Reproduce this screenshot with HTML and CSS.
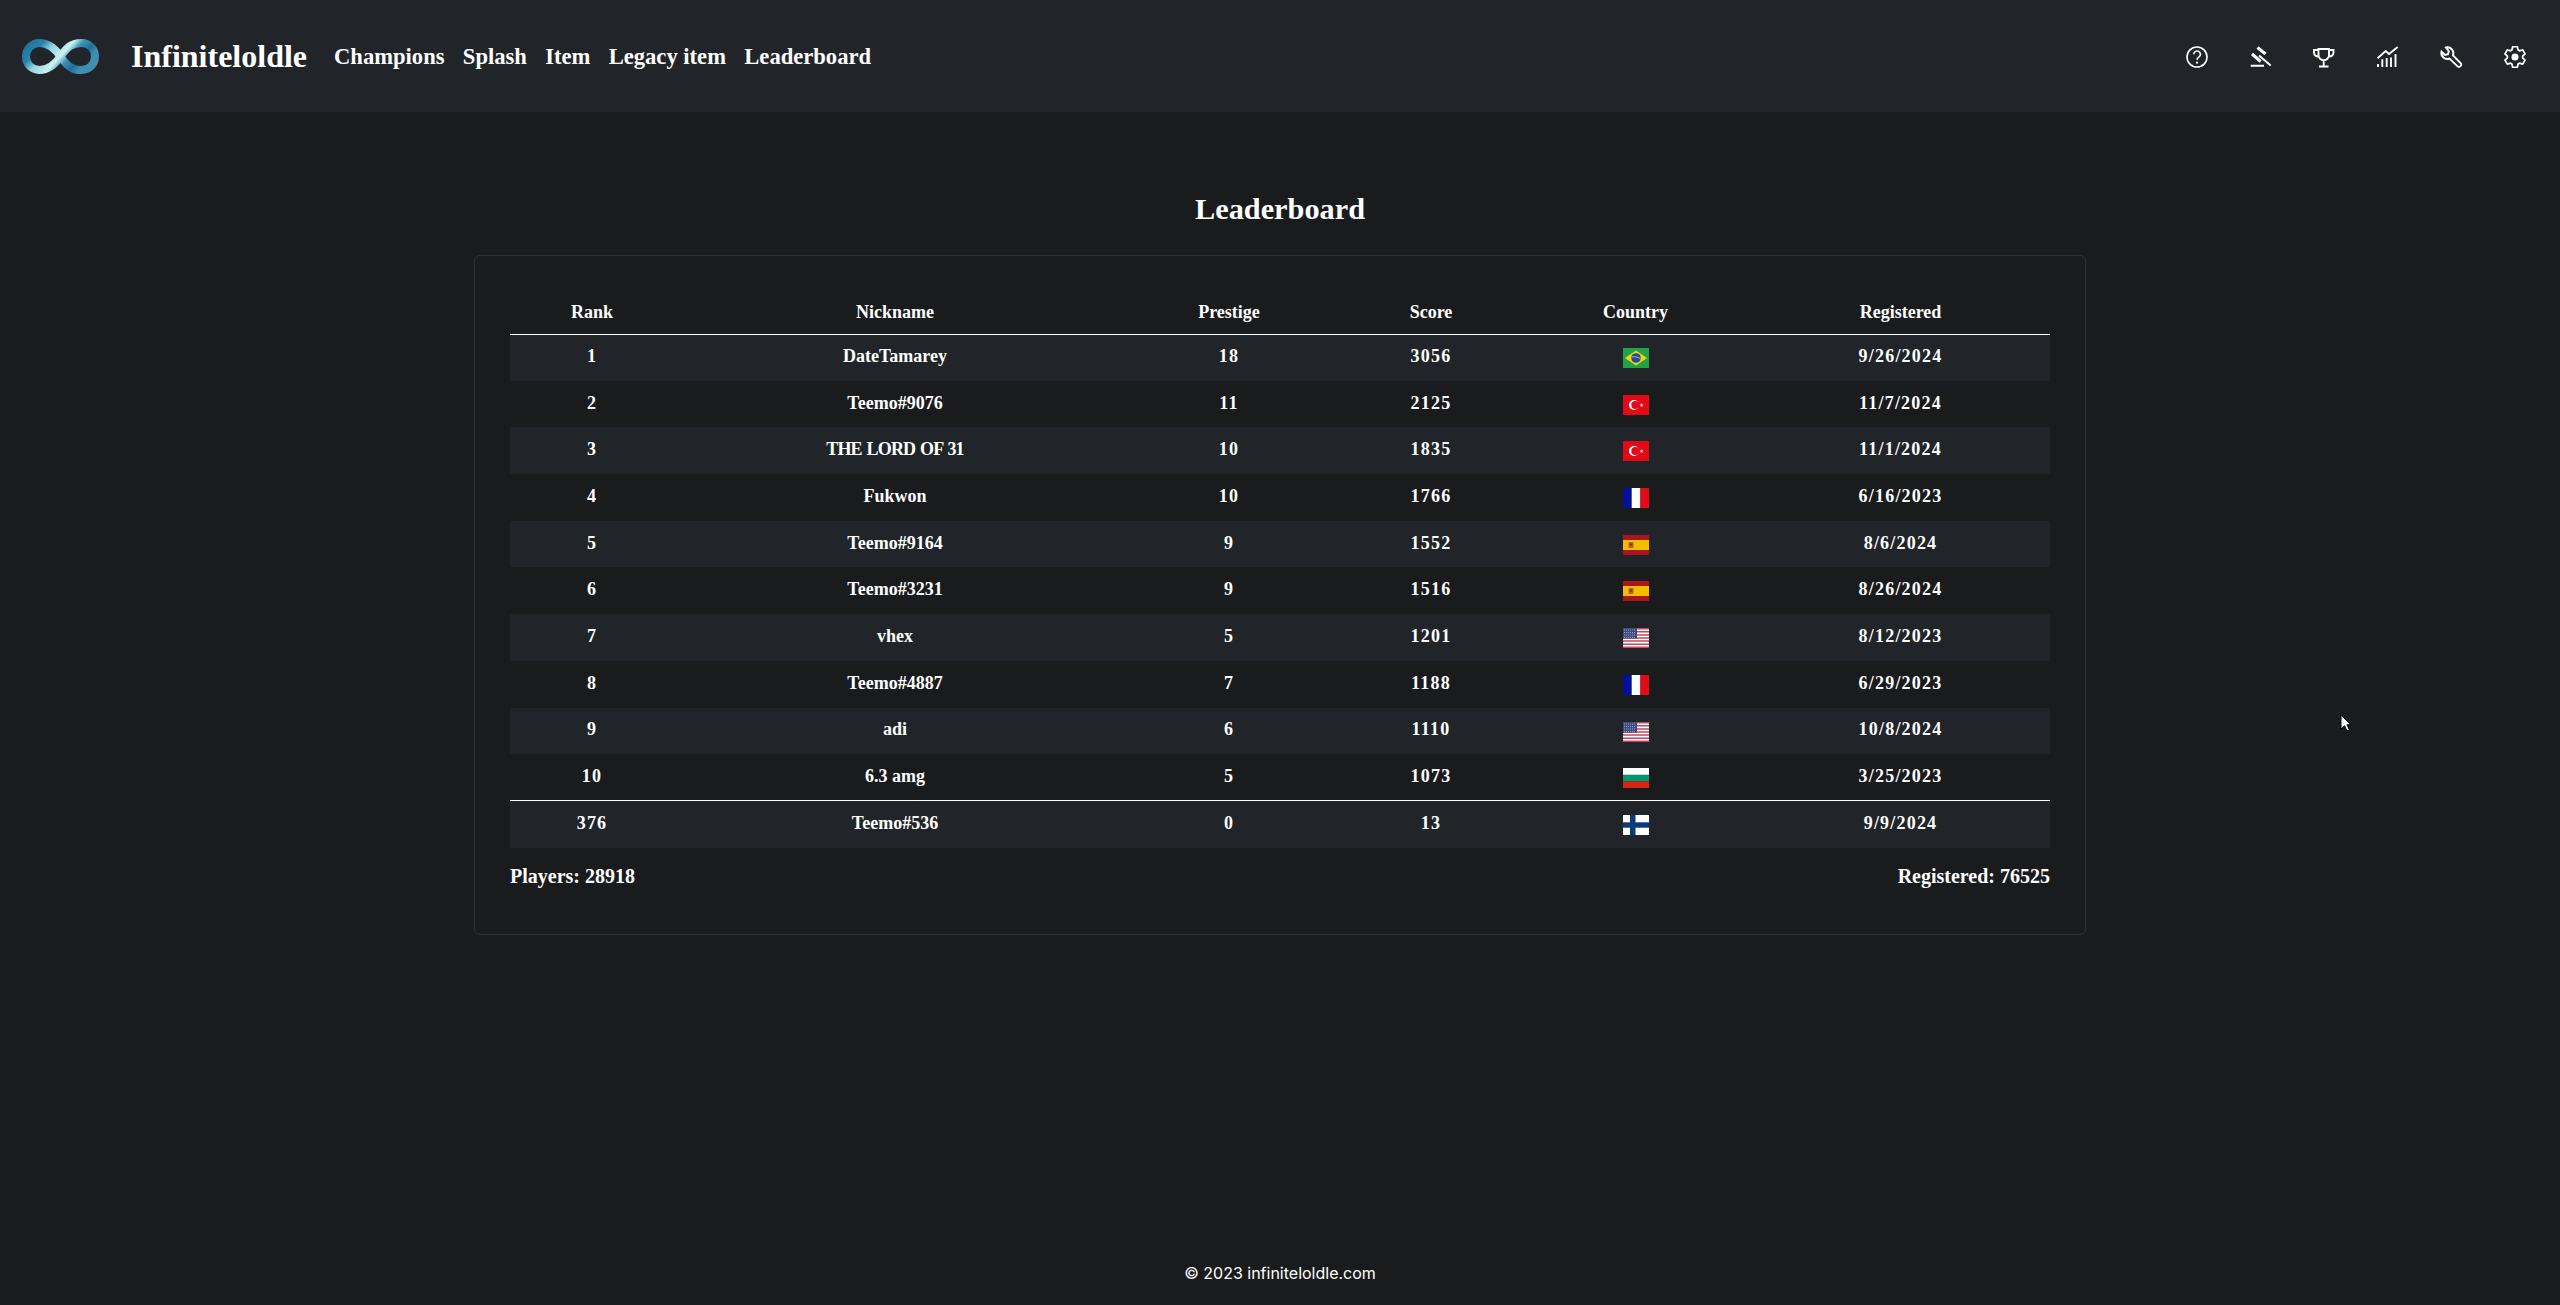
FILE: index.html
```html
<!DOCTYPE html>
<html lang="en">
<head>
<meta charset="utf-8">
<title>Infiniteloldle</title>
<link rel="stylesheet" href="styles.css">
</head>
<body>
<svg class="defs" width="0" height="0" aria-hidden="true">
  <defs>
    <linearGradient id="inf" x1="0" y1="0" x2="1" y2="0.35">
      <stop offset="0" stop-color="#1f7199"/>
      <stop offset="0.22" stop-color="#2a84a9"/>
      <stop offset="0.38" stop-color="#93d5e0"/>
      <stop offset="0.6" stop-color="#c9f2f2"/>
      <stop offset="0.72" stop-color="#3c93b5"/>
      <stop offset="0.88" stop-color="#1c7099"/>
      <stop offset="1" stop-color="#3f90b0"/>
    </linearGradient>
    <symbol id="fl-br" viewBox="0 0 26 20"><rect width="26" height="20" fill="#23a347"/><path d="M13 2.500 24 10 13 17.500 2 10z" fill="#f2d50f"/><circle cx="13" cy="10" r="4.800" fill="#2b4a9b"/><path d="M8.600 9c3-.6 6.200-.2 8.800 1.600" stroke="#d8e4e8" stroke-width=".7" fill="none"/></symbol>
    <symbol id="fl-tr" viewBox="0 0 26 20"><rect width="26" height="20" fill="#e30a17"/><circle cx="11" cy="10" r="5" fill="#fff"/><circle cx="12.300" cy="10" r="4" fill="#e30a17"/><path d="m18.500 8 .5 1.400h1.500l-1.200.9.5 1.500-1.300-.9-1.200.9.4-1.500-1.200-.9h1.500z" fill="#fff"/></symbol>
    <symbol id="fl-fr" viewBox="0 0 26 20"><rect width="8.700" height="20" fill="#00129a"/><rect x="8.700" width="8.700" height="20" fill="#fff"/><rect x="17.400" width="8.600" height="20" fill="#e30a17"/></symbol>
    <symbol id="fl-es" viewBox="0 0 26 20"><rect width="26" height="20" fill="#ab1519"/><rect y="5" width="26" height="10" fill="#f1bf00"/><rect x="5.500" y="7" width="5" height="6" rx="1" fill="#b5651d"/><rect x="6.700" y="8.500" width="2.600" height="2" fill="#ad1519"/></symbol>
    <symbol id="fl-us" viewBox="0 0 26 20">
      <rect width="26" height="20" fill="#fff"/>
      <path d="M0 .8h26M0 3.800h26M0 6.900h26M0 10h26M0 13.100h26M0 16.200h26M0 19.200h26" stroke="#c2485a" stroke-width="1.500"/>
      <rect width="14" height="10.700" fill="#3c4a7d"/>
      <path d="M1 2h12M1 4.500h12M1 7h12M1 9.500h12" stroke="#a9b0c8" stroke-width=".9" stroke-dasharray="1 1"/>
    </symbol>
    <symbol id="fl-bg" viewBox="0 0 26 20"><rect width="26" height="7" fill="#fff"/><rect y="6.700" width="26" height="6.700" fill="#00966e"/><rect y="13.300" width="26" height="6.700" fill="#d62612"/></symbol>
    <symbol id="fl-fi" viewBox="0 0 26 20"><rect width="26" height="20" fill="#fff"/><rect x="7" width="5.500" height="20" fill="#0a3a7a"/><rect y="7.300" width="26" height="5.400" fill="#0a3a7a"/></symbol>
  </defs>
</svg>

<header class="navbar">
  <a class="brand" href="#">
    <svg class="logo" viewBox="0 0 77 35"><path d="M38.500 17.500C32 8 26 4 17.500 4 9.500 4 4 10 4 17.500S9.500 31 17.500 31c8.500 0 14.500-4 21-13.500S50 4 59.500 4C67.500 4 73 10 73 17.500S67.500 31 59.500 31c-9.500 0-14.500-4-21-13.500z" fill="none" stroke="url(#inf)" stroke-width="8"/></svg>
    <span class="brand-name">Infiniteloldle</span>
  </a>
  <nav class="nav-links">
    <a href="#">Champions</a>
    <a href="#">Splash</a>
    <a href="#">Item</a>
    <a href="#">Legacy item</a>
    <a href="#">Leaderboard</a>
  </nav>
  <div class="nav-icons">
    <svg class="icon" viewBox="0 0 22 22"><circle cx="11" cy="11" r="10"/><path d="M7.800 8.300a3.300 3.300 0 1 1 5 2.800c-1.100.7-1.800 1.300-1.800 2.700"/><circle class="solid" cx="11" cy="16.700" r="1.100"/></svg>
    <svg class="icon" viewBox="0 0 22 22"><path class="mid" d="M.7 19.700H14M9 9.500l11.700 10"/><path class="thick" d="M2 8l8.700 7.500M7.500 1.500l8 6.500"/></svg>
    <svg class="icon" viewBox="0 0 22 22"><path class="mid" d="M6 20.500h9.500M10.700 14v6.500M5.500 3h10.500v6a5.200 5.200 0 0 1-10.500 0zM5.500 4H1v2.500A4 4 0 0 0 5.500 10.500M16 4h4.500v2.500A4 4 0 0 1 16 10.500"/></svg>
    <svg class="icon" viewBox="0 0 22 22"><path class="mid" d="M.5 12.300 8.700 5l3.300 3 8.700-7M1 21v-3M5.300 21v-7.700M9.700 21V12M14 21v-9.500M18.500 21V8"/></svg>
    <svg class="icon" viewBox="0 0 22 22"><path class="mid" d="M6 1.500A6 6 0 0 1 13 9.500L20.500 17a2.200 2.200 0 0 1-3.200 3.200L9.500 12.500A6 6 0 0 1 1.500 5.500L5 9l3-.8.800-3z"/></svg>
    <svg class="icon" viewBox="-0.5 -0.5 23 23"><path class="join" d="M7.750 3.690 8.530.28h4.940l.78 3.410 1.450.84 3.340-1.030 2.480 4.280-2.560 2.380v1.680l2.560 2.380-2.480 4.280-3.340-1.030-1.450.84-.78 3.410H8.530l-.78-3.410-1.450-.84-3.340 1.030-2.480-4.280 2.560-2.380v-1.680L.48 7.780l2.480-4.280 3.340 1.030z"/><circle class="solid" cx="11" cy="11" r="3.700"/></svg>
  </div>
</header>

<main class="content">
  <h1 class="title">Leaderboard</h1>
  <section class="card">
    <table class="board">
      <colgroup>
        <col class="c-rank"><col class="c-nick"><col class="c-prestige"><col class="c-score"><col class="c-country"><col class="c-reg">
      </colgroup>
      <thead>
        <tr><th>Rank</th><th>Nickname</th><th>Prestige</th><th>Score</th><th>Country</th><th>Registered</th></tr>
      </thead>
      <tbody>
        <tr><td>1</td><td>DateTamarey</td><td>18</td><td>3056</td><td><svg class="flag"><use href="#fl-br"/></svg></td><td>9/26/2024</td></tr>
        <tr><td>2</td><td>Teemo#9076</td><td>11</td><td>2125</td><td><svg class="flag"><use href="#fl-tr"/></svg></td><td>11/7/2024</td></tr>
        <tr><td>3</td><td class="tight">THE LORD OF 31</td><td>10</td><td>1835</td><td><svg class="flag"><use href="#fl-tr"/></svg></td><td>11/1/2024</td></tr>
        <tr><td>4</td><td>Fukwon</td><td>10</td><td>1766</td><td><svg class="flag"><use href="#fl-fr"/></svg></td><td>6/16/2023</td></tr>
        <tr><td>5</td><td>Teemo#9164</td><td>9</td><td>1552</td><td><svg class="flag"><use href="#fl-es"/></svg></td><td>8/6/2024</td></tr>
        <tr><td>6</td><td>Teemo#3231</td><td>9</td><td>1516</td><td><svg class="flag"><use href="#fl-es"/></svg></td><td>8/26/2024</td></tr>
        <tr><td>7</td><td>vhex</td><td>5</td><td>1201</td><td><svg class="flag"><use href="#fl-us"/></svg></td><td>8/12/2023</td></tr>
        <tr><td>8</td><td>Teemo#4887</td><td>7</td><td>1188</td><td><svg class="flag"><use href="#fl-fr"/></svg></td><td>6/29/2023</td></tr>
        <tr><td>9</td><td>adi</td><td>6</td><td>1110</td><td><svg class="flag"><use href="#fl-us"/></svg></td><td>10/8/2024</td></tr>
        <tr><td>10</td><td>6.3 amg</td><td>5</td><td>1073</td><td><svg class="flag"><use href="#fl-bg"/></svg></td><td>3/25/2023</td></tr>
      </tbody>
      <tfoot>
        <tr><td>376</td><td>Teemo#536</td><td>0</td><td>13</td><td><svg class="flag"><use href="#fl-fi"/></svg></td><td>9/9/2024</td></tr>
      </tfoot>
    </table>
    <div class="totals"><span>Players: 28918</span><span>Registered: 76525</span></div>
  </section>
</main>

<footer class="footer">© 2023 infiniteloldle.com</footer>

<svg class="cursor" viewBox="0 0 12 18"><path d="M1 1v14l3.500-3.300 2.500 5.300 2.400-1.100-2.400-5.100H11z" fill="#fff" stroke="#000" stroke-width="1"/></svg>
</body>
</html>
```

FILE: styles.css
```css
* { box-sizing: border-box; }
html, body { height: 100%; }
body {
  margin: 0;
  display: flex;
  flex-direction: column;
  background: #1a1b1d;
  color: #fff;
  font-family: "Liberation Serif", serif;
  font-weight: 700;
  overflow: hidden;
  position: relative;
}
a { color: inherit; text-decoration: none; }
.defs { position: absolute; }

.navbar {
  height: 112px;
  flex: none;
  display: flex;
  align-items: center;
  background: #212529;
  padding: 0 34px 0 22px;
}
.brand { display: flex; align-items: center; gap: 32px; }
.logo { width: 77px; height: 35px; flex: none; }
.brand-name { font-size: 32px; }
.nav-links { display: flex; gap: 18.300px; margin-left: 27px; font-size: 22.600px; padding-top: 1px; }
.nav-icons { margin-left: auto; display: flex; gap: 41.600px; padding-top: 2px; }
.icon {
  width: 22px; height: 22px;
  fill: none; stroke: #fff; stroke-width: 1.600;
  overflow: visible;
}
.icon .solid { fill: #fff; stroke: none; }
.icon .thick { stroke-width: 3; }
.icon .mid { stroke-width: 1.900; }
.icon .join { stroke-width: 1.800; stroke-linejoin: round; }

.content {
  flex: 1;
  display: flex;
  flex-direction: column;
  align-items: center;
  padding-top: 79px;
}
.title { margin: 0 0 28px; font-size: 30.300px; line-height: 36px; font-weight: 700; }
.card {
  width: 1612px;
  height: 680px;
  border: 1px solid #2f3136;
  border-radius: 6px;
  padding: 26px 35px 0;
}
.board { width: 100%; border-collapse: collapse; table-layout: fixed; font-size: 18px; }
.c-rank { width: 164px; } .c-nick { width: 442px; } .c-prestige { width: 226px; }
.c-score { width: 178px; } .c-country { width: 231px; } .c-reg { width: 299px; }
.board th, .board td { text-align: center; padding: 0; }
.board th { height: 52px; border-bottom: 1px solid #fff; padding-top: 9px; }
.board td { height: 46.700px; padding-bottom: 2px; }
.board td:nth-child(1), .board td:nth-child(3), .board td:nth-child(4), .board td:nth-child(6) { letter-spacing: 1.200px; }
.board td.tight { letter-spacing: -.8px; word-spacing: 1px; }
.board tbody tr:nth-child(odd) { background: #212529; }
.board tfoot tr { background: #212529; border-top: 1px solid #fff; }
.flag { display: inline-block; width: 26px; height: 20px; vertical-align: middle; margin-top: 3px; }
.totals { display: flex; justify-content: space-between; font-size: 20px; margin-top: 17px; }

.footer {
  flex: none;
  height: 56px;
  text-align: center;
  font-family: Inter, "Liberation Sans", sans-serif;
  font-weight: 400;
  font-size: 16px;
  line-height: 48px;
}
.cursor { position: absolute; left: 2340px; top: 714px; width: 12px; height: 18px; }
```
